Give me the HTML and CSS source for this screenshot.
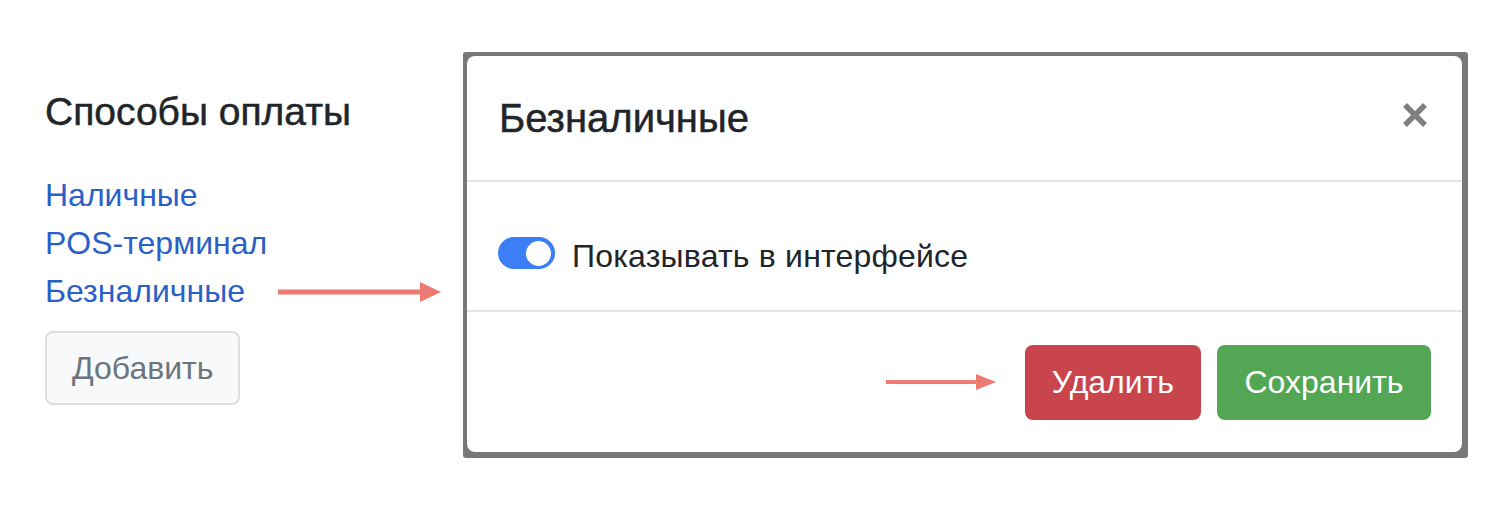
FILE: index.html
```html
<!DOCTYPE html>
<html lang="ru">
<head>
<meta charset="utf-8">
<title>Способы оплаты</title>
<link rel="stylesheet" href="styles.css">
</head>
<body>
<div class="page">
  <section class="methods">
    <h5 class="methods-title">Способы оплаты</h5>
    <ul class="methods-list">
      <li><a href="#" class="method-link">Наличные</a></li>
      <li><a href="#" class="method-link">POS-терминал</a></li>
      <li class="method-row">
        <a href="#" class="method-link">Безналичные</a>
        <svg class="arrow arrow-left" width="163" height="20" viewBox="0 0 163 20" aria-hidden="true">
          <rect x="0" y="7.5" width="144" height="5" fill="#ee7b73"/>
          <polygon points="142,0 163,10 142,20" fill="#ee7b73"/>
        </svg>
      </li>
    </ul>
    <button class="btn-add" type="button">Добавить</button>
  </section>

  <div class="modal-frame">
    <div class="modal-content">
      <div class="modal-header">
        <h5 class="modal-title">Безналичные</h5>
        <button class="close" type="button" aria-label="Закрыть">
          <svg width="26" height="26" viewBox="0 0 26 26" aria-hidden="true">
            <path d="M3 3 L23 23 M23 3 L3 23" stroke="#7f7f7f" stroke-width="5.5" fill="none"/>
          </svg>
        </button>
      </div>
      <div class="modal-body">
        <label class="switch-row">
          <span class="switch"><span class="switch-knob"></span></span>
          <span class="switch-label">Показывать в интерфейсе</span>
        </label>
      </div>
      <div class="modal-footer">
        <svg class="arrow arrow-footer" width="110" height="20" viewBox="0 0 110 20" aria-hidden="true">
          <rect x="0" y="8" width="92" height="4" fill="#ee7b73"/>
          <polygon points="90,2 110,10 90,18" fill="#ee7b73"/>
        </svg>
        <button class="btn btn-danger" type="button">Удалить</button>
        <button class="btn btn-success" type="button">Сохранить</button>
      </div>
    </div>
  </div>
</div>
</body>
</html>
```

FILE: styles.css
```css
* {
  box-sizing: border-box;
}

html, body {
  margin: 0;
  padding: 0;
  background: #ffffff;
}

body {
  font-family: "Liberation Sans", Arial, sans-serif;
  color: #212529;
  width: 1506px;
  height: 512px;
  overflow: hidden;
}

.page {
  display: flex;
  align-items: flex-start;
}

/* Left column */
.methods {
  width: 463px;
  padding: 88px 0 0 45px;
  display: flex;
  flex-direction: column;
  align-items: flex-start;
}

.methods-title {
  margin: 0;
  font-size: 39px;
  line-height: 48px;
  font-weight: 500;
  -webkit-text-stroke: 0.5px #212529;
  color: #212529;
}

.methods-list {
  list-style: none;
  margin: 35px 0 0 0;
  padding: 0;
}

.methods-list li {
  font-size: 32px;
  line-height: 48px;
  height: 48px;
}

.method-row {
  display: flex;
  align-items: center;
}

.method-link {
  color: #2a60c7;
  text-decoration: none;
}

.arrow-left {
  margin-left: 33px;
  margin-top: 2px;
  display: block;
}

.btn-add {
  margin-top: 16px;
  height: 74px;
  padding: 0 25px;
  font-family: inherit;
  font-size: 32px;
  line-height: 48px;
  color: #6c757d;
  background: #f8f9fa;
  border: 2px solid #dcdee0;
  border-radius: 8px;
}

/* Modal */
.modal-frame {
  margin-top: 52px;
  width: 1005px;
  height: 406px;
  padding: 4px 6px 6px 4px;
  background: #787878;
  border-radius: 3px;
}

.modal-content {
  width: 100%;
  height: 100%;
  background: #ffffff;
  border-radius: 8px;
  display: flex;
  flex-direction: column;
}

.modal-header {
  height: 126px;
  padding: 0 34px 0 32px;
  border-bottom: 2px solid #e2e5e8;
  display: flex;
  align-items: center;
  justify-content: space-between;
}

.modal-title {
  margin: 0;
  font-size: 40px;
  line-height: 60px;
  font-weight: 500;
  -webkit-text-stroke: 0.5px #212529;
  color: #212529;
}

.close {
  padding: 0;
  margin: -6px 0 0 0;
  border: 0;
  background: transparent;
  display: flex;
}

.modal-body {
  height: 128px;
  padding: 47px 32px 33px 31px;
}

.switch-row {
  display: flex;
  align-items: center;
  height: 48px;
}

.switch {
  width: 57px;
  height: 32px;
  border-radius: 16px;
  background: #3b7ef6;
  display: flex;
  align-items: center;
  justify-content: flex-end;
  padding-right: 4px;
  flex-shrink: 0;
}

.switch-knob {
  width: 25px;
  height: 25px;
  border-radius: 50%;
  background: #ffffff;
}

.switch-label {
  margin-left: 17px;
  padding-top: 6px;
  font-size: 32px;
  line-height: 48px;
  letter-spacing: 0.2px;
  color: #212529;
}

.modal-footer {
  flex: 1;
  border-top: 2px solid #e2e5e8;
  padding: 0 31px 0 0;
  display: flex;
  align-items: center;
  justify-content: flex-end;
}

.arrow-footer {
  margin-right: 29px;
  display: block;
}

.btn {
  height: 75px;
  padding: 0 27px;
  border: 0;
  border-radius: 8px;
  font-family: inherit;
  font-size: 32px;
  line-height: 48px;
  color: #ffffff;
}

.btn + .btn {
  margin-left: 16px;
}

.btn-danger {
  background: #c9454c;
}

.btn-success {
  background: #53a653;
  padding: 0 27.5px;
}
```
